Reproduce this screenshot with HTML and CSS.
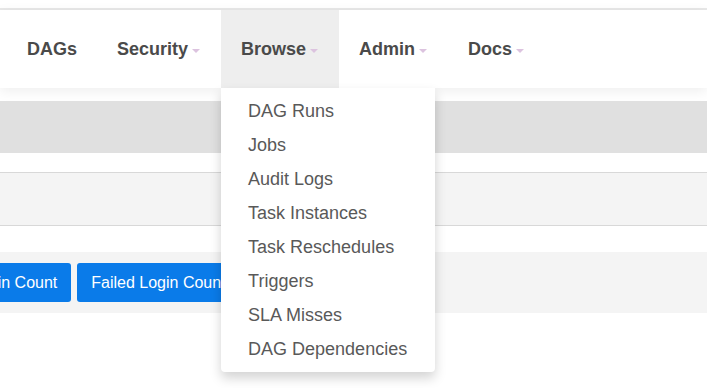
FILE: index.html
```html
<!DOCTYPE html>
<html lang="en">
<head>
    <meta charset="UTF-8">
    <meta name="viewport" content="width=device-width, initial-scale=1.0">
    <title>Airflow - Browse</title>
    <link rel="stylesheet" href="styles.css">
</head>
<body>
    <div class="top-strip"></div>

    <header class="navbar">
        <ul class="nav">
            <li><a href="#">DAGs</a></li>
            <li><a href="#">Security<span class="caret"></span></a></li>
            <li class="dropdown open">
                <a href="#">Browse<span class="caret"></span></a>
                <ul class="dropdown-menu">
                    <li><a href="#">DAG Runs</a></li>
                    <li><a href="#">Jobs</a></li>
                    <li><a href="#">Audit Logs</a></li>
                    <li><a href="#">Task Instances</a></li>
                    <li><a href="#">Task Reschedules</a></li>
                    <li><a href="#">Triggers</a></li>
                    <li><a href="#">SLA Misses</a></li>
                    <li><a href="#">DAG Dependencies</a></li>
                </ul>
            </li>
            <li><a href="#">Admin<span class="caret"></span></a></li>
            <li><a href="#">Docs<span class="caret"></span></a></li>
        </ul>
    </header>

    <main>
        <div class="panel-heading"></div>
        <div class="panel-body"></div>
        <div class="toolbar">
            <button class="btn btn-first">Login Count</button>
            <button class="btn">Failed Login Count</button>
        </div>
    </main>
</body>
</html>
```

FILE: styles.css
```css
/* Reset */
* {
    margin: 0;
    padding: 0;
    box-sizing: border-box;
}

html,
body {
    height: 100%;
}

body {
    font-family: 'Liberation Sans', Arial, sans-serif;
    background-color: #fff;
    color: #555;
}

.top-strip {
    height: 10px;
    border-bottom: 2px solid #e8e8e8;
}

/* Navbar */
.navbar {
    height: 78px;
    background-color: #fff;
    position: relative;
    z-index: 10;
    box-shadow: 0 3px 12px rgba(0, 0, 0, 0.07);
}

.nav {
    list-style: none;
    display: flex;
    height: 100%;
    padding-left: 7px;
}

.nav > li {
    position: relative;
    height: 100%;
}

.nav > li > a {
    display: flex;
    align-items: center;
    height: 100%;
    padding: 0 20px;
    text-decoration: none;
    font-size: 18px;
    font-weight: bold;
    color: #4a4a4a;
}

.nav > li.open > a {
    background-color: #eee;
}

.caret {
    display: inline-block;
    width: 0;
    height: 0;
    margin: 3px 1px 0 4px;
    border-top: 4px solid #dcc3df;
    border-left: 4px solid transparent;
    border-right: 4px solid transparent;
}

/* Dropdown */
.dropdown-menu {
    list-style: none;
    position: absolute;
    top: 100%;
    left: 0;
    width: 214px;
    padding: 6px 0;
    background-color: #fff;
    border-radius: 0 0 4px 4px;
    box-shadow: 0 6px 12px rgba(0, 0, 0, 0.175);
}

.dropdown-menu li a {
    display: block;
    padding: 7px 27px;
    line-height: 20px;
    font-size: 18px;
    color: #595959;
    text-decoration: none;
    white-space: nowrap;
}

/* Main content */
main {
    padding-top: 13px;
}

.panel-heading {
    height: 52px;
    background-color: #e0e0e0;
}

.panel-body {
    height: 54px;
    margin-top: 19px;
    background-color: #f4f4f4;
    border-top: 1px solid #d8d8d8;
    border-bottom: 1px solid #d8d8d8;
}

.toolbar {
    display: flex;
    gap: 6px;
    margin-top: 26px;
    padding: 11px 0;
    background-color: #f4f4f4;
    overflow: hidden;
}

.btn {
    flex-shrink: 0;
    height: 39px;
    padding: 0 14px;
    background-color: #0a7be9;
    border: none;
    border-radius: 3px;
    color: #fff;
    font-family: 'Liberation Sans', Arial, sans-serif;
    font-size: 16px;
    white-space: nowrap;
}

.btn-first {
    margin-left: -43px;
}
```
